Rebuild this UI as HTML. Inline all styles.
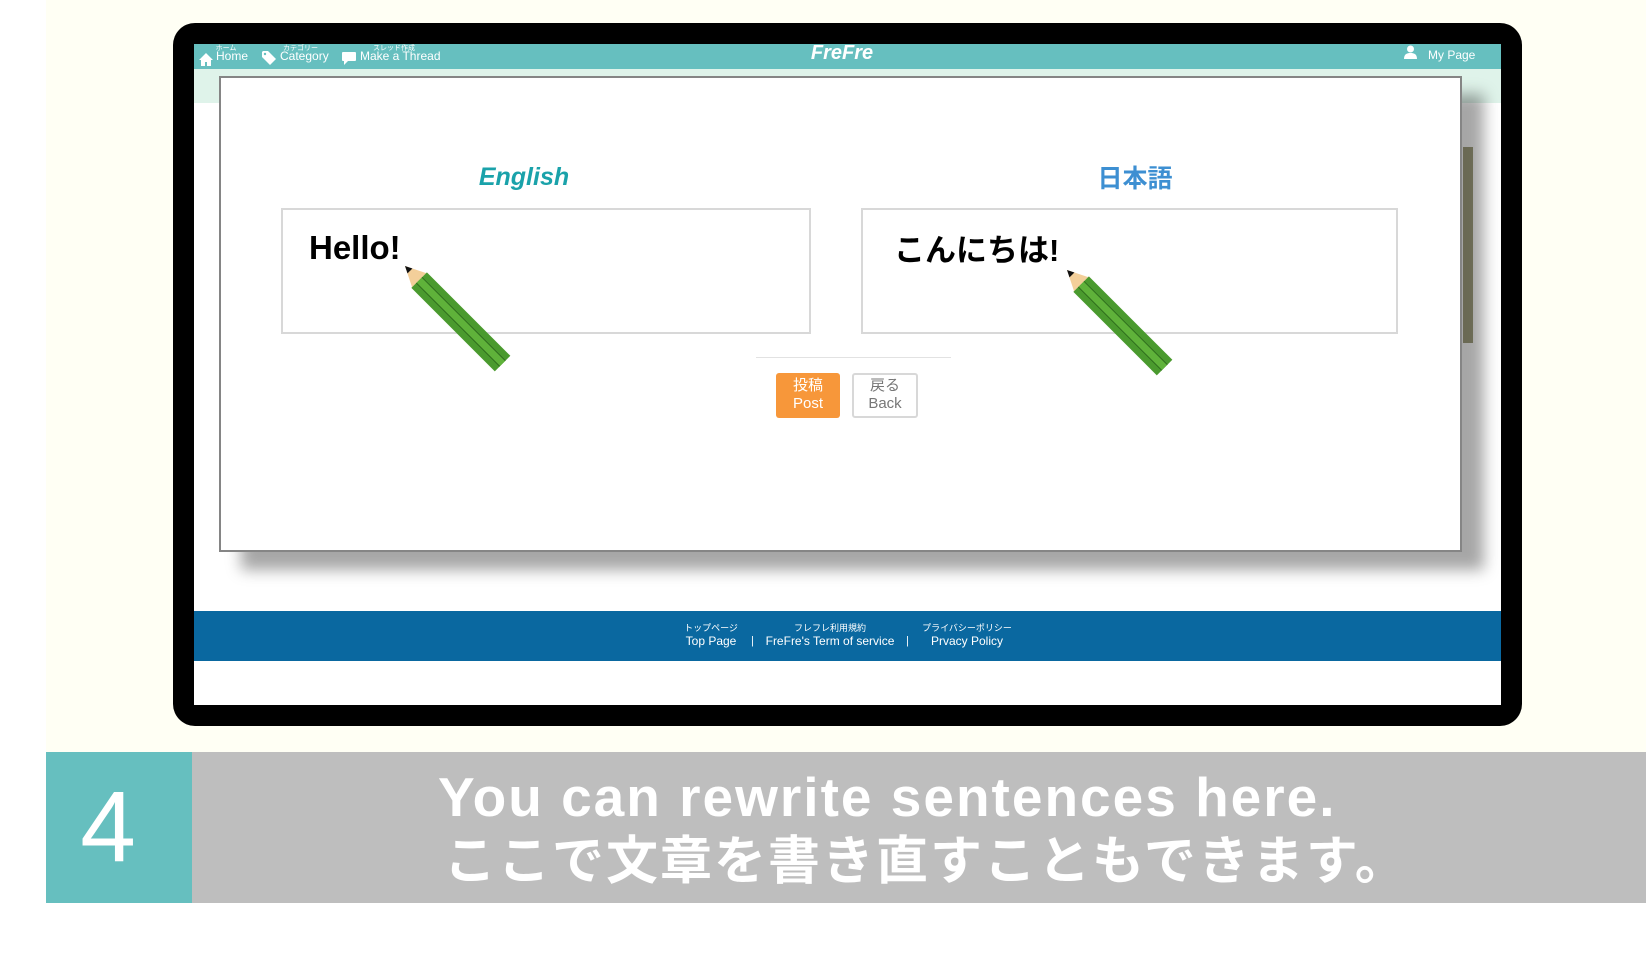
<!DOCTYPE html>
<html><head><meta charset="utf-8"><style>
*{margin:0;padding:0;box-sizing:border-box}
body{width:1646px;height:956px;background:#fff;position:relative;overflow:hidden;font-family:"Liberation Sans","Noto Sans CJK JP",sans-serif}
.a{position:absolute}
.t{text-align:center;white-space:nowrap}
</style></head><body>
<div class="a" style="left:46px;top:0;width:1600px;height:752px;background:#fffff4"></div>
<div class="a" style="left:173px;top:23px;width:1349px;height:703px;background:#000;border-radius:22px"></div>
<div class="a" style="left:194px;top:44px;width:1307px;height:661px;background:#fff;overflow:hidden">
  <div class="a" style="left:0;top:0;width:1307px;height:25px;background:#66bfbf"></div>
  <div class="a" style="left:0;top:25px;width:1307px;height:34px;background:#dff3ea"></div>
  <svg class="a" style="left:5px;top:9px" width="14" height="13" viewBox="0 0 14 13"><path d="M7 0L0 7h2v6h4V9h2v4h4V7h2z" fill="#fff"/></svg>
  <div class="a t" style="left:21px;top:-1px;font-size:7px;color:#fff;width:22px">ホーム</div>
  <div class="a" style="left:22px;top:5px;font-size:12px;color:#fff">Home</div>
  <svg class="a" style="left:68px;top:7px" width="14" height="14" viewBox="0 0 14 14"><path d="M0 1V6l8 8 6-6-8-8H1z" fill="#fff"/><circle cx="3" cy="3" r="1.2" fill="#66bfbf"/></svg>
  <div class="a t" style="left:84px;top:-1px;font-size:7px;color:#fff;width:45px">カテゴリー</div>
  <div class="a" style="left:86px;top:5px;font-size:12px;color:#fff">Category</div>
  <svg class="a" style="left:148px;top:8px" width="14" height="13" viewBox="0 0 14 13"><path d="M1 0h12a1 1 0 011 1v7a1 1 0 01-1 1H6l-4 4V9H1a1 1 0 01-1-1V1a1 1 0 011-1z" fill="#fff"/></svg>
  <div class="a t" style="left:165px;top:-1px;font-size:7px;color:#fff;width:70px">スレッド作成</div>
  <div class="a" style="left:166px;top:5px;font-size:12px;color:#fff">Make a Thread</div>
  <div class="a t" style="left:548px;top:-2px;width:200px;font-size:20px;font-weight:bold;font-style:italic;color:#fff">FreFre</div>
  <svg class="a" style="left:1210px;top:1px" width="13" height="14" viewBox="0 0 13 14"><circle cx="6.5" cy="4" r="3.5" fill="#fff"/><path d="M0 14c0-5 3-6 6.5-6S13 9 13 14z" fill="#fff"/></svg>
  <div class="a" style="left:1234px;top:4px;font-size:12px;color:#fff">My Page</div>
  <div class="a" style="left:1269px;top:103px;width:10px;height:196px;background:#a3a281"></div>
  <div class="a" style="left:25px;top:32px;width:1243px;height:476px;background:#fff;border:2px solid #858585;box-shadow:22px 18px 14px rgba(0,0,0,.35)"></div>
  <div class="a t" style="left:230px;top:119px;width:200px;font-size:25px;font-weight:bold;font-style:italic;color:#1aa2aa">English</div>
  <div class="a t" style="left:841px;top:115px;width:200px;font-size:25px;font-weight:bold;color:#3d8fd2">日本語</div>
  <div class="a" style="left:87px;top:164px;width:530px;height:126px;border:2px solid #d8d8d8"></div>
  <div class="a" style="left:667px;top:164px;width:537px;height:126px;border:2px solid #d8d8d8"></div>
  <div class="a" style="left:115px;top:185px;font-size:33px;font-weight:bold;color:#000">Hello!</div>
  <div class="a" style="left:700px;top:181px;font-size:31px;font-weight:bold;color:#000">こんにちは!</div>
  <div class="a" style="left:562px;top:313px;width:195px;height:1px;background:#e2e2e2"></div>
  <div class="a t" style="left:582px;top:329px;width:64px;height:45px;background:#f7973a;border-radius:3px;color:#fff;font-size:15px;line-height:18px;padding-top:4px">投稿<br>Post</div>
  <div class="a t" style="left:658px;top:329px;width:66px;height:45px;background:#fff;border:2px solid #d8d8d8;border-radius:3px;color:#777;font-size:15px;line-height:18px;padding-top:2px">戻る<br>Back</div>
  <div class="a" style="left:0;top:567px;width:1307px;height:50px;background:#0a68a0"></div>
  <div class="a t" style="left:467px;top:577px;width:100px;color:#fff;font-size:9px">トップページ</div>
  <div class="a t" style="left:467px;top:590px;width:100px;color:#fff;font-size:12px">Top Page</div>
  <div class="a" style="left:557px;top:591px;color:#fff;font-size:11px">|</div>
  <div class="a t" style="left:566px;top:577px;width:140px;color:#fff;font-size:9px">フレフレ利用規約</div>
  <div class="a t" style="left:556px;top:590px;width:160px;color:#fff;font-size:12px">FreFre's Term of service</div>
  <div class="a" style="left:712px;top:591px;color:#fff;font-size:11px">|</div>
  <div class="a t" style="left:723px;top:577px;width:100px;color:#fff;font-size:9px">プライバシーポリシー</div>
  <div class="a t" style="left:723px;top:590px;width:100px;color:#fff;font-size:12px">Prvacy Policy</div>
</div>
<svg class="a" style="left:0;top:0" width="1646" height="956">
  <g transform="translate(405,266) rotate(45)">
    <polygon points="0,0 20,-10 20,10" fill="#f3cf9a"/>
    <polygon points="0,0 7,-3.5 7,3.5" fill="#111"/>
    <rect x="20" y="-11" width="118" height="22" fill="#4a9a2e"/>
    <rect x="20" y="-4" width="118" height="8" fill="#5fb23a"/>
    <line x1="20" y1="-4" x2="138" y2="-4" stroke="#2f6e1d" stroke-width="1"/>
    <line x1="20" y1="4" x2="138" y2="4" stroke="#2f6e1d" stroke-width="1"/>
  </g>
  <g transform="translate(1067,270) rotate(45)">
    <polygon points="0,0 20,-10 20,10" fill="#f3cf9a"/>
    <polygon points="0,0 7,-3.5 7,3.5" fill="#111"/>
    <rect x="20" y="-11" width="118" height="22" fill="#4a9a2e"/>
    <rect x="20" y="-4" width="118" height="8" fill="#5fb23a"/>
    <line x1="20" y1="-4" x2="138" y2="-4" stroke="#2f6e1d" stroke-width="1"/>
    <line x1="20" y1="4" x2="138" y2="4" stroke="#2f6e1d" stroke-width="1"/>
  </g>
</svg>
<div class="a" style="left:46px;top:752px;width:1600px;height:151px;background:#bebebe"></div>
<div class="a" style="left:46px;top:752px;width:146px;height:151px;background:#66bfbf"></div>
<div class="a t" style="left:46px;top:772px;width:124px;font-size:100px;line-height:110px;color:#fff">4</div>
<div class="a" style="left:438px;top:765px;font-size:55px;line-height:64px;color:#fff;letter-spacing:2px;font-weight:bold">You can rewrite sentences here.</div>
<div class="a" style="left:444px;top:830px;font-size:52px;line-height:64px;color:#fff;letter-spacing:2px;font-weight:bold">ここで文章を書き直すこともできます。</div>
</body></html>
